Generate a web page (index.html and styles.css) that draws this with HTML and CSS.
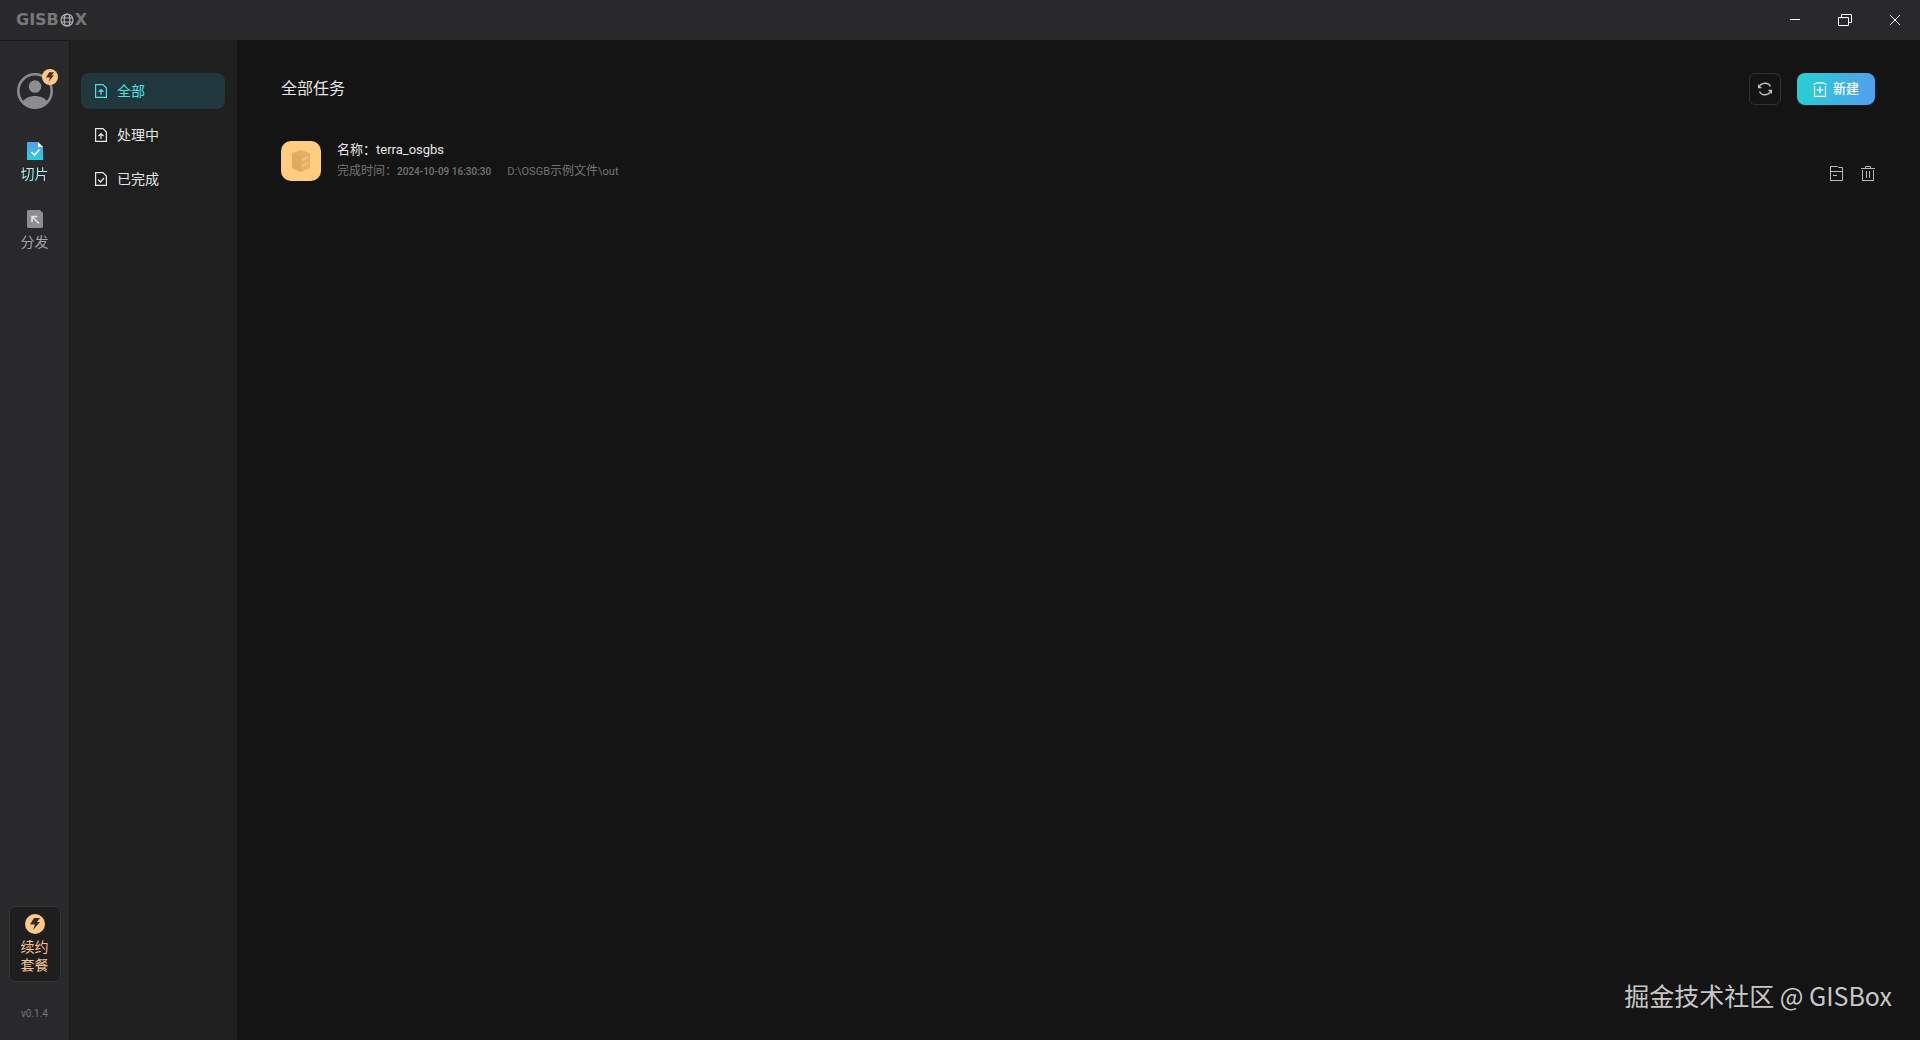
FILE: index.html
```html
<!DOCTYPE html>
<html lang="zh-CN">
<head>
    <meta charset="UTF-8">
    <meta name="viewport" content="width=device-width, initial-scale=1.0">
    <title>GISBox</title>
    <link rel="stylesheet" href="styles.css">
</head>
<body>
    <header class="titlebar">
        <div class="logo">
            <span>GISB</span>
            <svg width="14" height="14" viewBox="0 0 14 14" fill="none" stroke="currentColor" stroke-width="1.2">
                <circle cx="7" cy="7" r="6"/>
                <ellipse cx="7" cy="7" rx="2.800" ry="6"/>
                <path d="M1.500 5h11M1.500 9h11"/>
            </svg>
            <span>X</span>
        </div>
        <div class="window-buttons">
            <button type="button" aria-label="最小化">
                <svg width="14" height="14" viewBox="0 0 14 14" fill="none" stroke="currentColor"><path d="M2 6.500h10"/></svg>
            </button>
            <button type="button" aria-label="还原">
                <svg width="14" height="14" viewBox="0 0 14 14" fill="none" stroke="currentColor"><path d="M.5 4.500h10v8H.5zM3.500 4.500v-3h10v8h-3"/></svg>
            </button>
            <button type="button" aria-label="关闭">
                <svg width="14" height="14" viewBox="0 0 14 14" fill="none" stroke="currentColor"><path d="M2 2l10 10M12 2L2 12"/></svg>
            </button>
        </div>
    </header>
    <div class="layout">
        <nav class="rail">
            <button type="button" class="avatar" aria-label="账号">
                <svg width="36" height="36" viewBox="0 0 36 36">
                    <circle cx="18" cy="18" r="16.700" fill="none" stroke="#8c8c8e" stroke-width="2.600"/>
                    <circle cx="18" cy="13.500" r="6.300" fill="#8c8c8e"/>
                    <path d="M5 29c3-4 8-6 13-6s10 2 13 6c-3 4-8 6-13 6S8 33 5 29z" fill="#8c8c8e"/>
                </svg>
                <span class="badge">
                    <svg width="16" height="16" viewBox="0 0 20 20"><path d="M9 4h6l-3 4h3l-7 8 2-5.500H5z" fill="#4a3014"/></svg>
                </span>
            </button>
            <a href="#" class="rail-item active">
                <svg width="16" height="18" viewBox="0 0 16 18">
                    <defs>
                        <linearGradient id="slice" x1="0" y1="0" x2="0" y2="1">
                            <stop offset="0" stop-color="#569cf0"/>
                            <stop offset="1" stop-color="#27d0d8"/>
                        </linearGradient>
                    </defs>
                    <path d="M0 0h11l5 5v13H0z" fill="url(#slice)"/>
                    <path d="M11 0l5 5h-5z" fill="#fff"/>
                    <path d="M4.500 10l3 3 5-5.500" fill="none" stroke="#fff" stroke-width="1.600"/>
                </svg>
                <span>切片</span>
            </a>
            <a href="#" class="rail-item">
                <svg width="16" height="18" viewBox="0 0 16 18">
                    <path d="M1 0h12l3 3v14l-1 1H1l-1-1V1z" fill="#8e8e90"/>
                    <path d="M5 12V6.500h5.500M5 6.500l7 7" fill="none" stroke="#e4e4e4" stroke-width="1.600"/>
                </svg>
                <span>分发</span>
            </a>
            <button type="button" class="renew">
                <svg width="20" height="20" viewBox="0 0 20 20">
                    <circle cx="10" cy="10" r="10" fill="#fdc98a"/>
                    <path d="M9 4h6l-3 4h3l-7 8 2-5.500H5z" fill="#3a2817"/>
                </svg>
                <span>续约<br>套餐</span>
            </button>
            <p class="version">v0.1.4</p>
        </nav>
        <aside class="sidebar">
            <a href="#" class="filter active">
                <svg width="12" height="14" viewBox="0 0 12 14" fill="none" stroke="currentColor" stroke-width="1.200"><path d="M.6.600h7.400l3.400 3.400v9.400H.6zM6 11V6M3.500 8L6 5.500 8.500 8"/></svg>
                <span>全部</span>
            </a>
            <a href="#" class="filter">
                <svg width="12" height="14" viewBox="0 0 12 14" fill="none" stroke="currentColor" stroke-width="1.200"><path d="M.6.600h7.400l3.400 3.400v9.400H.6zM6 11V6M3.500 8L6 5.500 8.500 8"/></svg>
                <span>处理中</span>
            </a>
            <a href="#" class="filter">
                <svg width="12" height="14" viewBox="0 0 12 14" fill="none" stroke="currentColor" stroke-width="1.200"><path d="M.6.600h7.400l3.400 3.400v9.400H.6zM3.200 7.500l2.300 2.500L9 6"/></svg>
                <span>已完成</span>
            </a>
        </aside>
        <main class="content">
            <div class="toolbar">
                <h1>全部任务</h1>
                <button type="button" class="refresh" aria-label="刷新">
                    <svg width="14" height="14" viewBox="0 0 14 14" fill="none" stroke="currentColor" stroke-width="1.300"><path d="M1 5.500C3 0 10.500 0 12.500 4.500M.5 2.500v3.200h3M13 8.500C11 14 3.500 14 1.500 9.500M13.500 11.500V8.300h-3"/></svg>
                </button>
                <button type="button" class="create">
                    <svg width="14" height="15" viewBox="0 0 14 15" fill="none" stroke="currentColor" stroke-width="1.200"><path d="M.5 2.500L4 .8h6l3.500 1.700M1.500 4v10.300h11V4M7 4.500v7M3.500 8h7"/></svg>
                    <span>新建</span>
                </button>
            </div>
            <div class="task">
                <div class="task-icon">
                    <svg width="20" height="24" viewBox="0 0 20 24">
                        <path d="M10 1l9 3v15l-9 4-9-4V4z" fill="#e5b066"/>
                        <path d="M1 4l9 3v16l-9-4z" fill="#dfa95f"/>
                        <path d="M11 11l6-3M11 17l6-3" stroke="#f3c078" stroke-width="2"/>
                    </svg>
                </div>
                <div class="task-info">
                    <p class="task-name">名称：terra_osgbs</p>
                    <p class="task-meta">
                        <span>完成时间：<time>2024-10-09 16:30:30</time></span>
                        <span class="path">D:\OSGB<span>示例文件</span>\out</span>
                    </p>
                </div>
                <div class="task-actions">
                    <button type="button" aria-label="打开目录">
                        <svg width="13" height="15" viewBox="0 0 13 15" fill="none" stroke="currentColor"><path d="M.5 14.500V.5h7l1 1h4v13zM.5 5.500h12M3 9.500h4"/></svg>
                    </button>
                    <button type="button" aria-label="删除">
                        <svg width="14" height="15" viewBox="0 0 14 15" fill="none" stroke="currentColor"><path d="M0 2.500h14M4.500 2.500v-2h5v2M1.500 4v10.500h11V4M5.500 5v7M8.500 5v7"/></svg>
                    </button>
                </div>
            </div>
        </main>
    </div>
    <p class="watermark">掘金技术社区 @ GISBox</p>
</body>
</html>
```
FILE: styles.css
```css
* {
    margin: 0;
    padding: 0;
    box-sizing: border-box;
}
body {
    font-family: "Roboto", "Noto Sans CJK SC", sans-serif;
    font-size: 14px;
    color: #e6e6e6;
    background-color: #141414;
    height: 100vh;
    display: flex;
    flex-direction: column;
    overflow: hidden;
}
button {
    font: inherit;
    color: inherit;
    background: none;
    border: none;
    cursor: pointer;
    display: flex;
    align-items: center;
    justify-content: center;
}
a {
    color: inherit;
    text-decoration: none;
}
svg {
    display: block;
    flex-shrink: 0;
}
.titlebar {
    height: 40px;
    background-color: #29292b;
    display: flex;
    align-items: center;
    justify-content: space-between;
    padding-left: 16px;
}
.logo {
    display: flex;
    align-items: center;
    gap: 1px;
    font-family: "DejaVu Sans", sans-serif;
    font-size: 16px;
    line-height: 20px;
    font-weight: 700;
    color: #77777a;
}
.logo svg {
    color: #b4b4b6;
}
.window-buttons {
    display: flex;
}
.window-buttons button {
    width: 50px;
    height: 40px;
    color: #fff;
}
.layout {
    flex: 1;
    display: flex;
    min-height: 0;
}
.rail {
    width: 70px;
    background-color: #29292b;
    border-top: 1px solid #1a1a1b;
    border-right: 1px solid #1a1a1b;
    display: flex;
    flex-direction: column;
    align-items: center;
    padding: 32px 0 18px;
}
.avatar {
    position: relative;
    margin-bottom: 33px;
}
.badge {
    position: absolute;
    top: -4px;
    right: -5px;
    border-radius: 50%;
    background-color: #fdc98a;
}
.rail-item {
    display: flex;
    flex-direction: column;
    align-items: center;
    gap: 4px;
    line-height: 20px;
    color: #a4a4a6;
    margin-bottom: 26px;
}
.rail-item.active span {
    color: transparent;
    background: linear-gradient(#c8f4ff, #8ff0e4);
    background-clip: text;
}
.renew {
    width: 52px;
    height: 76px;
    margin-top: auto;
    flex-direction: column;
    gap: 4px;
    line-height: 18px;
    color: #f5c48c;
    background-color: #1e1e1f;
    border: 1px solid #343436;
    border-radius: 6px;
}
.version {
    margin-top: 24px;
    font-size: 10px;
    line-height: 16px;
    color: #77777a;
}
.sidebar {
    width: 167px;
    background-color: #1f1f1f;
    padding: 33px 12px 33px 11px;
    display: flex;
    flex-direction: column;
    gap: 8px;
}
.filter {
    height: 36px;
    padding: 0 14px;
    display: flex;
    align-items: center;
    gap: 10px;
    line-height: 20px;
    border-radius: 8px;
}
.filter.active {
    color: #4de0e4;
    background-color: #20383d;
}
.content {
    flex: 1;
    padding: 33px 45px 24px 44px;
}
.toolbar {
    display: flex;
    align-items: center;
    gap: 16px;
}
h1 {
    flex: 1;
    font-size: 16px;
    line-height: 20px;
    font-weight: 400;
}
.refresh {
    width: 32px;
    height: 32px;
    color: #c4c4c4;
    border: 1px solid #323234;
    border-radius: 6px;
}
.create {
    height: 32px;
    padding: 0 16px;
    gap: 6px;
    font-size: 13px;
    line-height: 18px;
    font-weight: 500;
    color: #fff;
    background: linear-gradient(100deg, #26d0d4, #539df0);
    border-radius: 8px;
}
.task {
    display: flex;
    align-items: flex-start;
    gap: 16px;
    margin-top: 36px;
}
.task-icon {
    width: 40px;
    height: 40px;
    border-radius: 10px;
    background-color: #ffcd80;
    display: flex;
    align-items: center;
    justify-content: center;
}
.task-info {
    flex: 1;
}
.task-name {
    font-size: 13px;
    line-height: 18px;
}
.task-meta {
    display: flex;
    align-items: baseline;
    gap: 16px;
    font-size: 12px;
    line-height: 24px;
    color: #747474;
}
.task-meta time {
    font-size: 10px;
    font-weight: 500;
}
.path {
    font-size: 11px;
}
.path span {
    font-size: 12px;
}
.task-actions {
    height: 40px;
    display: flex;
    gap: 18px;
    align-items: flex-end;
    color: #b8b8b8;
}
.watermark {
    position: absolute;
    right: 28px;
    bottom: 27px;
    font-family: "Noto Sans CJK SC", sans-serif;
    font-size: 25px;
    color: #c8c8c8;
}
```
